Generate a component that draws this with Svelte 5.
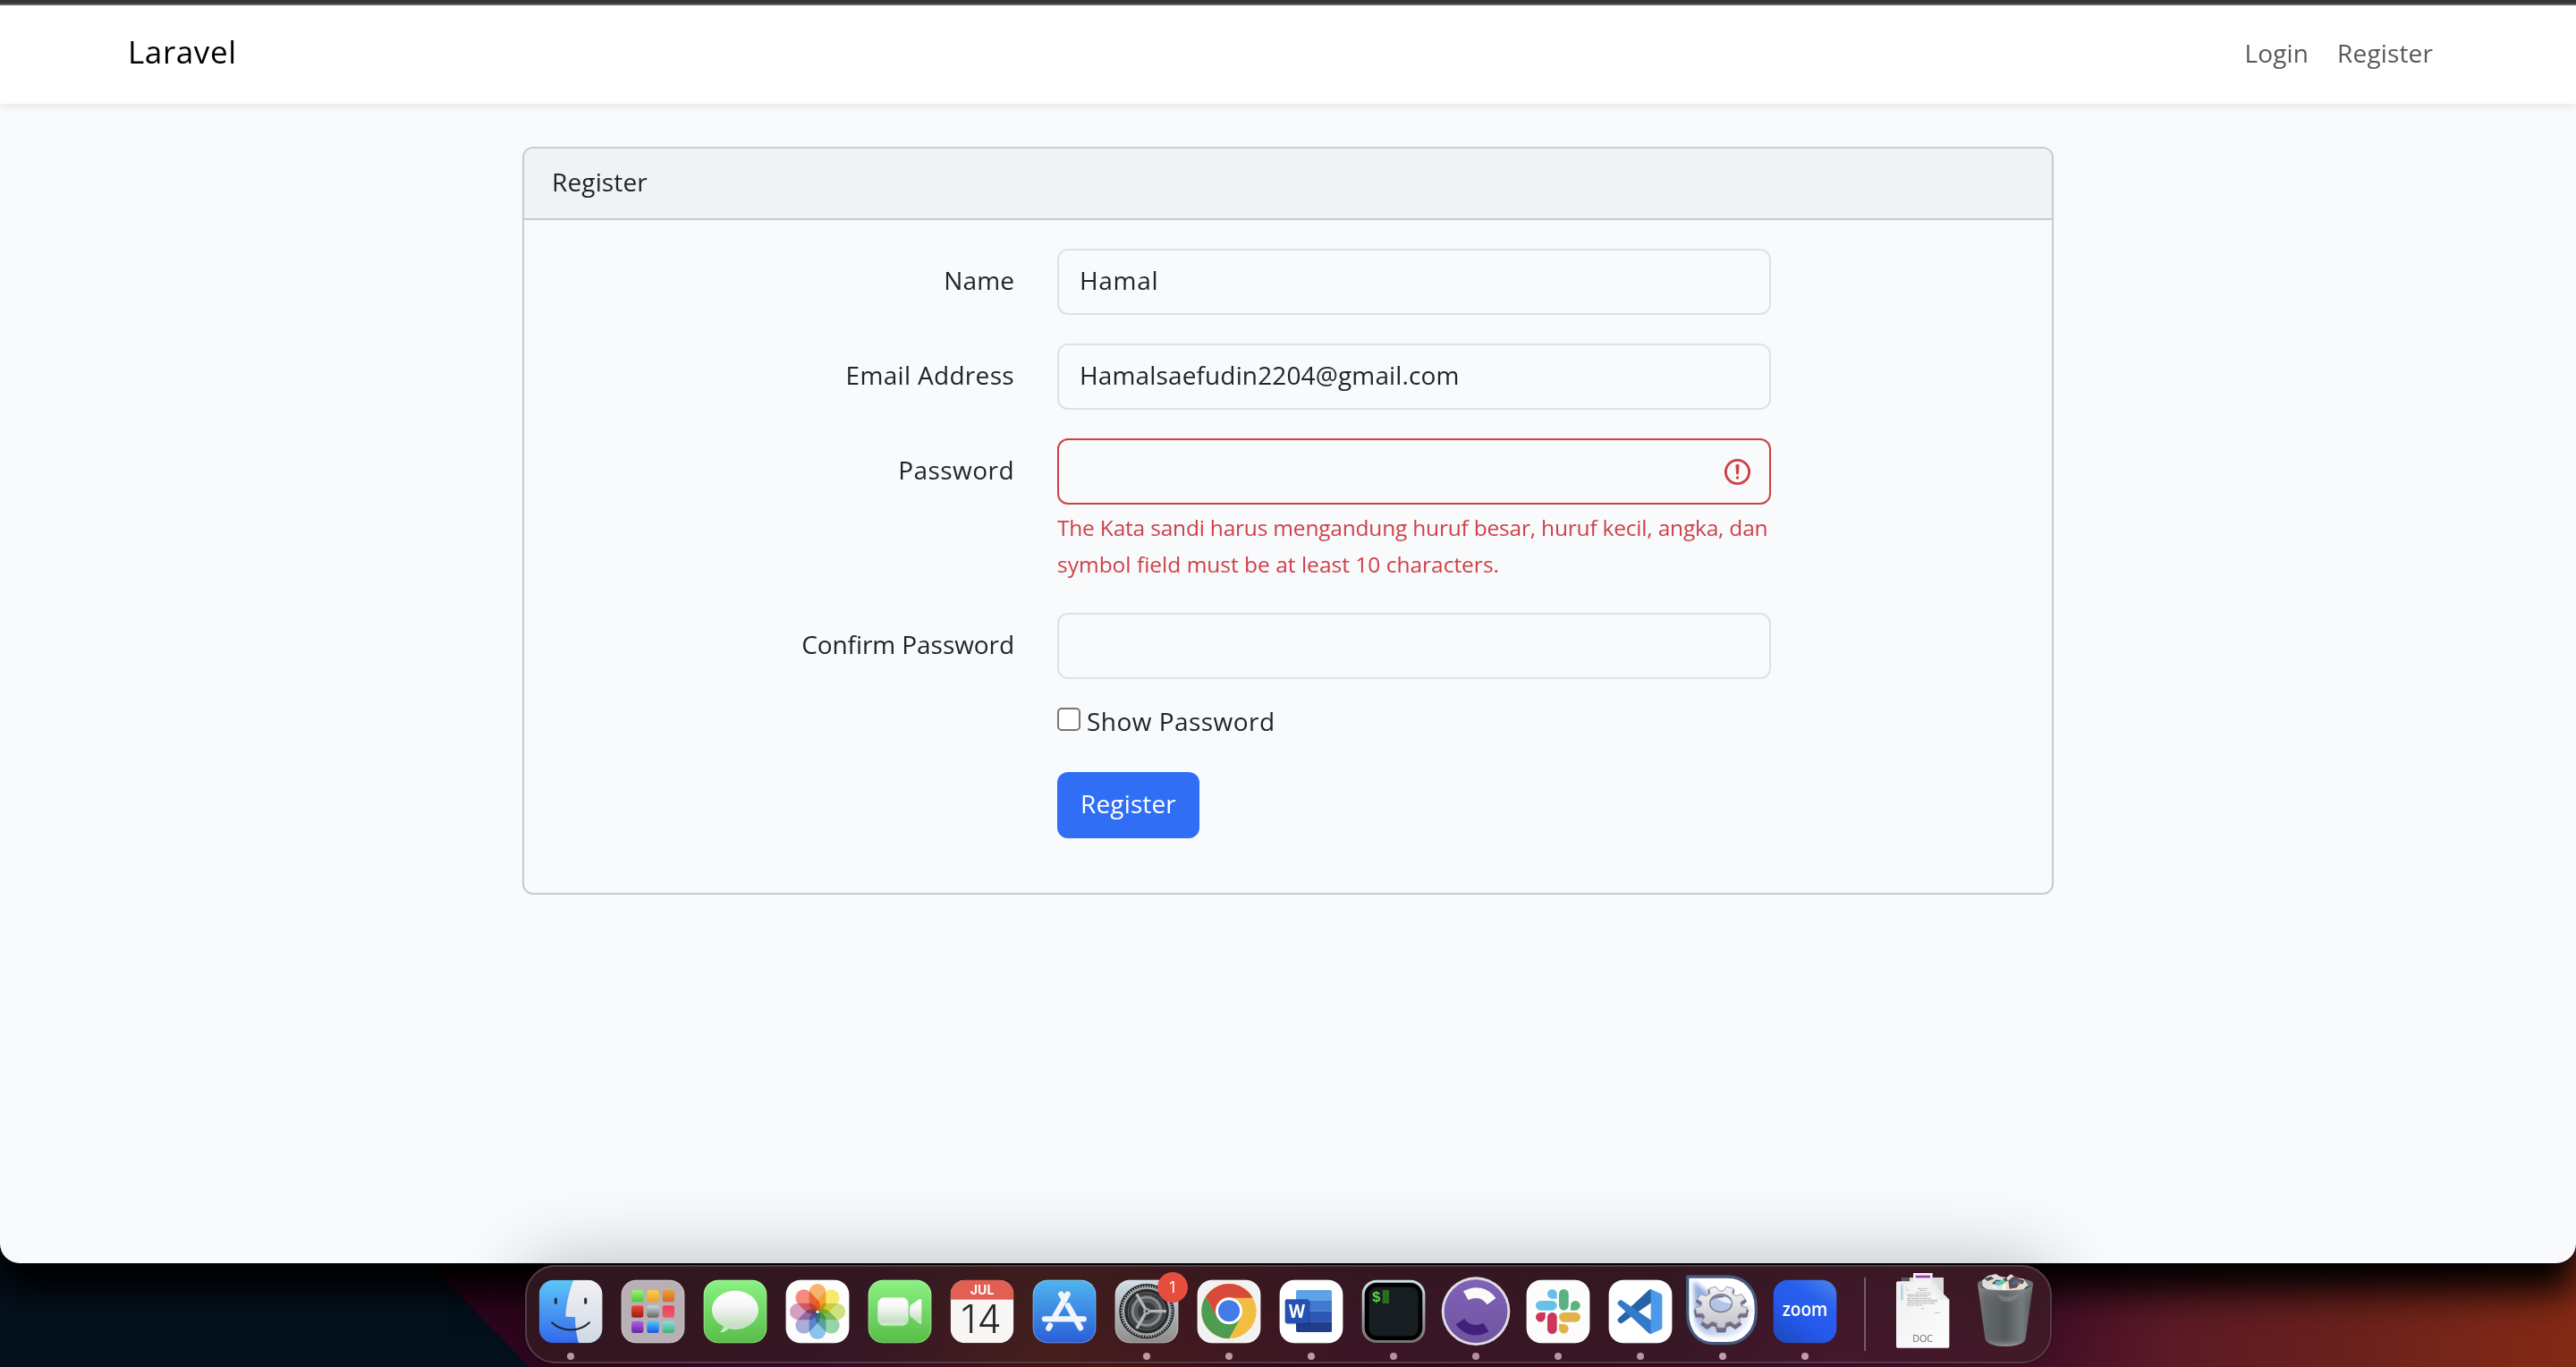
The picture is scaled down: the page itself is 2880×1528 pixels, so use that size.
<script>
  let showPassword = $state(false);
  let name = $state('Hamal');
  let email = $state('Hamalsaefudin2204@gmail.com');
  let password = $state('');
  let confirmation = $state('');

  const petals = [
    ['#f2932f', 0],
    ['#f5e02e', 45],
    ['#bcd548', 90],
    ['#6cc083', 135],
    ['#5ba8e4', 180],
    ['#8588ca', 225],
    ['#c077aa', 270],
    ['#f05a48', 315],
  ];

  const tiles = [
    ['#9cf478', '#4fc435'], ['#fbd04a', '#eda02a'], ['#f0a032', '#d5682a'],
    ['#ee4836', '#9c1b16'], ['#cdd9de', '#646466'], ['#f03c58', '#ea5c6c'],
    ['#b060e8', '#6426a4'], ['#3fd0fa', '#2450e0'], ['#84e4dc', '#42ac78'],
  ];

  // Outline of a toothed wheel, scaled separately on each axis.
  function wheel(cx, cy, rx, ry, teeth, depth, turn = 0) {
    const pts = [];
    for (let i = 0; i < teeth; i++) {
      for (const [f, r] of [[-0.33, depth], [-0.2, 1], [0.2, 1], [0.33, depth]]) {
        const a = ((i + f + turn) / teeth) * Math.PI * 2 - Math.PI / 2;
        pts.push(`${(cx + Math.cos(a) * rx * r).toFixed(1)} ${(cy + Math.sin(a) * ry * r).toFixed(1)}`);
      }
    }
    return `M${pts.join('L')}Z`;
  }
</script>

{#snippet plate(x, fill)}
  <rect {x} y="122" width="212" height="212" rx="49" {fill} />
  <rect x={x + 1.5} y="123.5" width="209" height="209" rx="48" fill="none" stroke="#fff" stroke-opacity=".28" stroke-width="3" />
{/snippet}

{#snippet alertIcon()}
  <svg class="alert" viewBox="0 0 12 12" fill="none" stroke="#cf4048" stroke-width="1">
    <circle cx="6" cy="6" r="4.5" />
    <path stroke-linejoin="round" d="M5.8 3.6h.4L6 6.5z" />
    <circle cx="6" cy="8.2" r=".6" fill="#cf4048" stroke="none" />
  </svg>
{/snippet}

<div class="desktop">
  <svg class="wallpaper" viewBox="0 0 2880 140" preserveAspectRatio="none">
    <defs>
      <linearGradient id="wall" x1="0" x2="1">
        <stop offset=".16" stop-color="#2a0519" />
        <stop offset=".32" stop-color="#420a30" />
        <stop offset=".43" stop-color="#5a1a12" />
        <stop offset=".5" stop-color="#3a0620" />
        <stop offset=".74" stop-color="#4a0f30" />
        <stop offset=".8" stop-color="#4a1129" />
        <stop offset=".85" stop-color="#5d1b25" />
        <stop offset=".92" stop-color="#6c221b" />
        <stop offset="1" stop-color="#852a15" />
      </linearGradient>
    </defs>
    <rect width="2880" height="140" fill="url(#wall)" />
    <path d="M0 0H455L592 140H0z" fill="#04111d" />
  </svg>

  <div class="window">
    <div class="chrome-edge"></div>
    <nav class="navbar">
      <a class="brand" href="#home">Laravel</a>
      <div class="links">
        <a class="login" href="#login">Login</a>
        <a class="reg" href="#register">Register</a>
      </div>
    </nav>

    <main>
      <section class="card">
        <header class="card-header">Register</header>
        <form class="card-body">
          <div class="row">
            <label class="t-name" for="name">Name</label>
            <input id="name" class="control t-hamal" type="text" bind:value={name} />
          </div>
          <div class="row">
            <label class="t-email" for="email">Email Address</label>
            <input id="email" class="control t-mail" type="text" bind:value={email} />
          </div>
          <div class="row">
            <label class="t-pass" for="password">Password</label>
            <div>
              <div class="field">
                <input id="password" class="control invalid" type={showPassword ? 'text' : 'password'} bind:value={password} />
                {@render alertIcon()}
              </div>
              <p class="feedback">
                <span class="t-err1">The Kata sandi harus mengandung huruf besar, huruf kecil, angka, dan</span><br />
                <span class="t-err2">symbol field must be at least 10 characters.</span>
              </p>
            </div>
          </div>
          <div class="row">
            <label class="t-confirm" for="confirm">Confirm Password</label>
            <input id="confirm" class="control" type={showPassword ? 'text' : 'password'} bind:value={confirmation} />
          </div>
          <div class="row check-row">
            <span></span>
            <label class="check">
              <input type="checkbox" bind:checked={showPassword} />
              <span class="t-show">Show Password</span>
            </label>
          </div>
          <div class="row last">
            <span></span>
            <button type="button" class="btn">Register</button>
          </div>
        </form>
      </section>
    </main>
  </div>

  <div class="dock">
    <!-- Finder -->
    <svg class="app" viewBox="96 72 276 330">
      <defs>
        <linearGradient id="fb" x2="0" y2="1"><stop stop-color="#5cc6f8" /><stop offset="1" stop-color="#3468ec" /></linearGradient>
        <linearGradient id="fw" x2="0" y2="1"><stop stop-color="#f1f1f3" /><stop offset="1" stop-color="#d0d8e6" /></linearGradient>
        <clipPath id="fc"><rect x="128" y="122" width="212" height="212" rx="49" /></clipPath>
      </defs>
      <g clip-path="url(#fc)">
        <rect x="128" y="122" width="212" height="212" fill="url(#fb)" />
        <path d="M244 122C228 160 219 205 217 241q0 5 5 5h27c0 34 5 62 12 88h85V122z" fill="url(#fw)" />
      </g>
      <path d="M184 186v13M284 186v13" stroke="#222a38" stroke-width="9" stroke-linecap="round" />
      <path d="M171 265c34 33 92 33 126 0" fill="none" stroke="#20242c" stroke-width="6" stroke-linecap="round" />
      <circle cx="234" cy="378" r="12" fill="#b795a8" />
    </svg>
    <!-- Launchpad -->
    <svg class="app" viewBox="372 72 276 330">
      {@render plate(404, '#b9b0b6')}
      {#each tiles as [top, bottom], i}
        <linearGradient id="lp{i}" x2="0" y2="1"><stop stop-color={top} /><stop offset="1" stop-color={bottom} /></linearGradient>
        <rect x={438 + (i % 3) * 52} y={156 + Math.floor(i / 3) * 52} width="40" height="40" rx="8" fill="url(#lp{i})" />
      {/each}
    </svg>
    <!-- Messages -->
    <svg class="app" viewBox="648 72 276 330">
      <defs>
        <linearGradient id="gr" x2="0" y2="1"><stop stop-color="#8bf283" /><stop offset="1" stop-color="#58bd48" /></linearGradient>
        <linearGradient id="wg" x2="0" y2="1"><stop stop-color="#ffffff" /><stop offset=".35" stop-color="#f6f7f6" /><stop offset=".85" stop-color="#c5dfc2" /><stop offset="1" stop-color="#d4eed0" /></linearGradient>
      </defs>
      {@render plate(680, 'url(#gr)')}
      <path d="M786 158c43 0 78 29 78 65s-35 65-78 65c-8 0-15-1-22-3-7 7-16 12-25 13-3 0-3-2-1-4 4-4 8-9 9-16-24-11-39-31-39-55 0-36 35-65 78-65z" fill="url(#wg)" />
    </svg>
    <!-- Photos -->
    <svg class="app" viewBox="924 72 276 330">
      {@render plate(956, '#fdfdfd')}
      <g class="petals">
        {#each petals as [color, angle]}
          <rect x="1034" y="135" width="56" height="93" rx="28" fill={color} fill-opacity=".86" transform="rotate({angle} 1062 228)" />
        {/each}
      </g>
      <circle cx="1062" cy="229" r="5" fill="#f4f4e8" />
    </svg>
    <!-- FaceTime -->
    <svg class="app" viewBox="1200 72 276 330">
      {@render plate(1232, 'url(#gr)')}
      <rect x="1264" y="181" width="103" height="94" rx="21" fill="url(#wg)" stroke="#b9e6b2" stroke-width="2" />
      <path d="M1371 214q0-5 4-8l28-19q8-4 8 4v74q0 8-8 3l-27-21q-5-4-5-10z" fill="url(#wg)" />
    </svg>
    <!-- Calendar -->
    <svg class="app" viewBox="36 72 276 330">
      <defs>
        <clipPath id="cc"><rect x="68" y="122" width="212" height="212" rx="49" /></clipPath>
      </defs>
      <g clip-path="url(#cc)">
        <rect x="68" y="122" width="212" height="212" fill="#f7f6f4" />
        <rect x="68" y="122" width="212" height="66" fill="#e25f54" />
      </g>
      <text class="month" x="174" y="172" text-anchor="middle" textLength="80">JUL</text>
      <text class="day" x="171" y="300" text-anchor="middle" textLength="136">14</text>
    </svg>
    <!-- App Store -->
    <svg class="app" viewBox="312 72 276 330">
      <defs>
        <linearGradient id="as" x2="0" y2="1"><stop stop-color="#50b4ee" /><stop offset="1" stop-color="#2a5ed8" /></linearGradient>
      </defs>
      {@render plate(344, 'url(#as)')}
      <g stroke="#f1f6fd" stroke-width="19" stroke-linecap="round">
        <path d="M384 253h131" />
        <path d="M461 170l-44 76" />
        <path d="M439 170l11 19M462 208l42 75" />
        <path d="M402 275l-5 9" />
      </g>
    </svg>
    <!-- System settings -->
    <svg class="app" viewBox="588 72 276 330">
      <defs>
        <linearGradient id="ss" x2="0" y2="1"><stop stop-color="#d2dfe6" /><stop offset="1" stop-color="#8e8c8a" /></linearGradient>
      </defs>
      {@render plate(620, 'url(#ss)')}
      <circle cx="726" cy="227" r="92" fill="#1e2022" />
      <circle cx="726" cy="227" r="78" fill="#2a2b2c" stroke="#a9adb0" stroke-width="7" />
      <circle cx="726" cy="227" r="84" fill="none" stroke="#a9adb0" stroke-width="8" stroke-dasharray="4.4 4.4" />
      <circle cx="726" cy="227" r="62" fill="none" stroke="#8f9395" stroke-width="2" />
      <circle cx="726" cy="227" r="47" fill="#58595a" stroke="#8d9092" stroke-width="8" />
      <circle cx="726" cy="227" r="53" fill="none" stroke="#7f8284" stroke-width="6" stroke-dasharray="3 3" />
      <circle cx="726" cy="227" r="30" fill="#3a3b3c" />
      <path d="M726 227h66M726 227l-34-58M726 227l-34 58" stroke="#b4b8ba" stroke-width="10" />
      <circle cx="726" cy="227" r="11" fill="#a5a9ab" />
      <circle cx="726" cy="227" r="4" fill="#333" />
      <circle cx="813" cy="147" r="51" fill="#e54d3d" />
      <text class="count" x="812" y="165" text-anchor="middle">1</text>
      <circle cx="726" cy="378" r="12" fill="#c497a4" />
    </svg>
    <!-- Chrome -->
    <svg class="app" viewBox="864 72 276 330">
      {@render plate(896, '#f3f2f2')}
      <circle cx="1002" cy="227" r="92" fill="#f2be42" />
      <path d="M924 178A92 92 0 0 0 1002 319L1041 249L1002 227L963 249z" fill="#4d9c51" />
      <path d="M924 178A92 92 0 0 1 1082 182H1002V227L963 249z" fill="#d8493a" />
      <circle cx="1002" cy="226" r="45" fill="#fff" />
      <circle cx="1002" cy="226" r="36" fill="#437be8" />
      <circle cx="1002" cy="378" r="12" fill="#bf97a6" />
    </svg>
    <!-- Word -->
    <svg class="app" viewBox="1140 72 276 330">
      {@render plate(1172, '#fff')}
      <path d="M1227 192v-31q0-5 5-5h110q5 0 5 5v31z" fill="#5ea3e8" />
      <path d="M1227 192h120v35h-120z" fill="#4378ce" />
      <path d="M1227 227h120v35h-120z" fill="#2d57b7" />
      <path d="M1227 262h120v30q0 5-5 5h-110q-5 0-5-5z" fill="#203d8a" />
      <rect x="1193" y="191" width="81" height="80" rx="6" fill="#15306f" opacity=".45" />
      <rect x="1190" y="187" width="81" height="80" rx="6" fill="#2551b4" />
      <text class="word" x="1230" y="248" text-anchor="middle" textLength="54" lengthAdjust="spacingAndGlyphs">W</text>
      <circle cx="1278" cy="378" r="12" fill="#bf97a6" />
    </svg>
    <!-- Terminal -->
    <svg class="app" viewBox="36 72 276 330">
      <defs>
        <linearGradient id="tm" x2="0" y2="1"><stop stop-color="#cfe3ea" /><stop offset="1" stop-color="#77716f" /></linearGradient>
      </defs>
      <rect x="68" y="122" width="212" height="211" rx="49" fill="url(#tm)" />
      <rect x="77" y="131" width="194" height="193" rx="41" fill="#000" />
      <rect x="92" y="146" width="165" height="164" rx="24" fill="#161e22" />
      <text class="prompt" x="101" y="195">$</text>
      <rect x="137" y="156" width="22" height="45" fill="#2d6b1d" />
      <circle cx="174" cy="378" r="12" fill="#b88f9f" />
    </svg>
    <!-- Insomnia -->
    <svg class="app" viewBox="312 72 276 330">
      <defs>
        <linearGradient id="im" x2="0" y2="1"><stop stop-color="#8062b8" /><stop offset="1" stop-color="#70549f" /></linearGradient>
      </defs>
      <circle cx="450" cy="227" r="115" fill="#dfdbe6" />
      <circle cx="450" cy="227" r="105" fill="url(#im)" stroke="#5f4691" stroke-width="2" />
      <path d="M408 160A80 80 0 0 1 517 183L488 205A45 45 0 0 0 425 190z" fill="#fafafa" />
      <path d="M383 271A80 80 0 0 0 493 295L475 266A45 45 0 0 1 412 252z" fill="#402079" />
      <circle cx="450" cy="378" r="12" fill="#b88f9f" />
    </svg>
    <!-- Slack -->
    <svg class="app" viewBox="588 72 276 330">
      {@render plate(620, '#fcfcfc')}
      <g fill="#64c2ea">
        <path d="M722 185h-16a16 16 0 1 1 16-16z" />
        <rect x="651" y="192" width="71" height="32" rx="16" />
      </g>
      <g fill="#5bb182">
        <rect x="729" y="153" width="32" height="71" rx="16" />
        <path d="M768 224v-16a16 16 0 1 1 16 16z" />
      </g>
      <g fill="#e3b34b">
        <rect x="729" y="231" width="72" height="32" rx="16" />
        <path d="M729 270h16a16 16 0 1 1-16 16z" />
      </g>
      <g fill="#cf3459">
        <path d="M683 231v16a16 16 0 1 1-16-16z" />
        <rect x="690" y="231" width="32" height="72" rx="16" />
      </g>
      <circle cx="726" cy="378" r="12" fill="#bb92a3" />
    </svg>
    <!-- VS Code -->
    <svg class="app" viewBox="864 72 276 330">
      {@render plate(896, '#fff')}
      <path d="M1030 156q4-4 8-3v46L941 266q-4 4-9 0l-5-5q-4-5 0-9z" fill="#2863a8" />
      <path d="M1030 301q4 3 8 2v-46L941 191q-4-4-9 0l-5 5q-4 5 0 9z" fill="#3579cb" />
      <path d="M1037 153l33 15q5 3 5 8v105q0 5-5 8l-33 14z" fill="#4a99ea" />
      <circle cx="1002" cy="378" r="12" fill="#bb92a3" />
    </svg>
    <!-- Gear utility -->
    <svg class="app" viewBox="60 72 276 330">
      <defs>
        <linearGradient id="gb" x1=".1" y1=".1" x2="1" y2=".9"><stop stop-color="#8ba9e0" /><stop offset=".5" stop-color="#b9caea" /><stop offset="1" stop-color="#eef3fb" /></linearGradient>
        <linearGradient id="gm" x2="0" y2="1"><stop stop-color="#f4f4f5" /><stop offset="1" stop-color="#c4c2ca" /></linearGradient>
        <filter id="soft" x="-20%" y="-20%" width="140%" height="140%"><feGaussianBlur stdDeviation="8" /></filter>
        <clipPath id="gc"><path d="M80 111H215C270 111 310 153 310 213V230C310 292 270 335 213 335H167C115 335 80 295 80 235z" /></clipPath>
      </defs>
      <path d="M80 111H215C270 111 310 153 310 213V230C310 292 270 335 213 335H167C115 335 80 295 80 235z" fill="#fff" />
      <g clip-path="url(#gc)">
        <path d="M100 125L190 195L292 210C292 270 260 312 208 312H175C130 312 103 280 103 232z" fill="url(#gb)" filter="url(#soft)" />
      </g>
      <path d="M80 111H215C270 111 310 153 310 213V230C310 292 270 335 213 335H167C115 335 80 295 80 235z" fill="none" stroke="#435a7e" stroke-width="10" stroke-linejoin="round" />
      <path d={wheel(193, 222, 89, 74, 9, 0.78, 0.5)} fill="#706d84" stroke="#706d84" stroke-width="6" stroke-linejoin="round" />
      <path d={wheel(193, 213, 87, 70, 9, 0.78, 0.5)} fill="url(#gm)" stroke="#9a98a6" stroke-width="3" stroke-linejoin="round" />
      <ellipse cx="192" cy="200" rx="37" ry="30" fill="#b3c4e8" stroke="#77758a" stroke-width="4" />
      <path d="M158 193q8-20 34-20t34 20q-12-12-34-12t-34 12z" fill="#77758a" />
      <path d="M180 186q24 14 48 16q-2-18-22-24z" fill="#e8eefa" />
      <circle cx="198" cy="378" r="12" fill="#c59ab0" />
    </svg>
    <!-- Zoom -->
    <svg class="app" viewBox="336 72 276 330">
      <defs>
        <linearGradient id="zm" x1="1" x2=".3" y2="1"><stop stop-color="#4a86ea" /><stop offset=".35" stop-color="#2a60ee" /><stop offset=".7" stop-color="#2458ea" /><stop offset="1" stop-color="#1f4cc8" /></linearGradient>
      </defs>
      <rect x="368" y="122" width="212" height="212" rx="49" fill="url(#zm)" />
      <text class="zoom" x="398" y="244" textLength="152" lengthAdjust="spacingAndGlyphs">zoom</text>
      <circle cx="474" cy="378" r="12" fill="#c59ab0" />
    </svg>

    <span class="separator"></span>

    <!-- Documents stack -->
    <svg class="app" viewBox="732 72 276 330">
      <defs>
        <linearGradient id="dc" x2="1" y2="1"><stop stop-color="#f0f0f0" /><stop offset="1" stop-color="#fdfdfd" /></linearGradient>
        <linearGradient id="fold" x1="0" y1="1" x2="1" y2="0"><stop stop-color="#ffffff" /><stop offset=".5" stop-color="#e6e6e6" /><stop offset="1" stop-color="#c4c4c4" /></linearGradient>
      </defs>
      <path d="M799 114h140v80H799z" fill="#dcdcde" />
      <path d="M799 114h26v14h-26z" fill="#55565c" />
      <path d="M837 99h65v30h-65z" fill="#f4f0f4" />
      <path d="M845 107h49v8h-49z" fill="#9c3ab0" />
      <path d="M785 127h112l61 61v157q0 5-5 5H785q-5 0-5-5V132q0-5 5-5z" fill="url(#dc)" />
      <path d="M795 137h8v53h-8z" fill="#b5d6ea" />
      <path d="M810 145l14 14M812 156h10" stroke="#e2b8a8" stroke-width="2" />
      <path d="M852 151h34M858 157h22M846 165h48M816 172h80M820 177h68M816 184h82M816 190h104M820 195h98M816 201h92M816 207h50M865 218h8M910 232h19" stroke="#9a9a9a" stroke-width="2" stroke-dasharray="14 2 8 2" />
      <path d="M898 112q-1 40-1 76 30-4 61 0-17-6-29-28-16-28-31-48z" fill="url(#fold)" stroke="#d0d0d0" stroke-width="1" />
      <text class="doc" x="869" y="330" text-anchor="middle" textLength="69" lengthAdjust="spacingAndGlyphs">DOC</text>
    </svg>
    <!-- Trash -->
    <svg class="app" viewBox="1008 72 276 330">
      <defs>
        <linearGradient id="tr" x2="1"><stop stop-color="#787d80" /><stop offset=".15" stop-color="#626769" /><stop offset=".5" stop-color="#555b5d" /><stop offset=".8" stop-color="#767b7d" /><stop offset="1" stop-color="#53585a" /></linearGradient>
        <linearGradient id="tl" x2="0" y2="1"><stop stop-color="#bcc0c2" stop-opacity=".35" /><stop offset=".4" stop-color="#555" stop-opacity="0" /><stop offset=".85" stop-color="#555" stop-opacity="0" /><stop offset="1" stop-color="#c2c6c8" stop-opacity=".6" /></linearGradient>
      </defs>
      <ellipse cx="1146" cy="134" rx="93" ry="20" fill="#6e7375" />
      <path d="M1068 124l20-16 26-6 14 8 22 4 14-11 22 12 22 4 14 20-18 17-50 10-60-5-24-17z" fill="#dedddb" />
      <path d="M1076 118l22-8 10 8-22 8zM1100 134l14-12 18 0-10 16zM1190 118l20 6-6 12-18-4zM1138 118l12-4 4 12-12 2z" fill="#504f4e" />
      <path d="M1110 128l34-6 2 12-26 8z" fill="#48c8d8" />
      <path d="M1124 132l22-4-4 12z" fill="#7ac452" />
      <path d="M1156 124l20-16 24 16-16 24-24 4z" fill="#6c4a44" />
      <path d="M1166 132l14-12 12 6-14 14z" fill="#3b6cae" />
      <path d="M1184 134l12-8-2 14z" fill="#c8703a" />
      <path d="M1096 140l24 6-8 8zM1136 138l10-8 2 26-14-2z" fill="#f5f4f2" />
      <path d="M1053 134c8 14 30 20 50 21 30 3 60 3 86 0 20-1 42-7 50-21l-25 185c-4 35-132 35-136 0z" fill="url(#tr)" />
      <path d="M1053 134c8 14 30 20 50 21 30 3 60 3 86 0 20-1 42-7 50-21l-25 185c-4 35-132 35-136 0z" fill="url(#tl)" />
      <path d="M1118 172q46 14 76-4-26 38-60 24z" fill="#a5aaac" opacity=".35" />
    </svg>
  </div>
</div>

<style>
  :global(body) { background: #04111d; }

  .desktop {
    position: relative;
    width: 2880px;
    height: 1528px;
    overflow: hidden;
    font-family: "Open Sans", "Noto Sans", sans-serif;
    font-size: 28px;
    line-height: 46px;
    color: #212529;
  }
  .desktop * { box-sizing: border-box; }
  .wallpaper {
    position: absolute;
    left: 0;
    bottom: 0;
    width: 2880px;
    height: 140px;
  }

  .window {
    position: relative;
    height: 1412px;
    background: #f8fafc;
    border-radius: 0 0 22px 22px;
    box-shadow: 0 32px 40px #000, 0 0 2px #000;
  }
  .chrome-edge {
    height: 6px;
    background: #363636;
    border-bottom: 2px solid #636363;
  }
  .navbar {
    display: flex;
    align-items: center;
    justify-content: space-between;
    height: 110px;
    padding: 0 160px 0 143px;
    background: #fff;
    box-shadow: 0 4px 8px rgba(0, 0, 0, .075);
  }
  .navbar a { text-decoration: none; }
  .brand {
    padding-bottom: 6px;
    font-size: 35px;
    letter-spacing: .6px;
    color: #000;
  }
  .links {
    display: flex;
    gap: 32px;
    padding-bottom: 4px;
  }
  .links a { color: #595959; }
  .login { letter-spacing: .15px; }
  .reg { letter-spacing: .14px; }

  main {
    display: flex;
    justify-content: center;
    padding-top: 48px;
  }
  .card {
    width: 1712px;
    height: 836px;
    border: 2px solid #c9cbcd;
    border-radius: 12px;
    overflow: hidden;
  }
  .card-header {
    height: 80px;
    padding: 14px 31px 0;
    background: #f1f2f4;
    border-bottom: 2px solid #c9cbcd;
    letter-spacing: .14px;
  }
  .card-body { padding: 32px 0; }
  .row {
    display: grid;
    grid-template-columns: 548px 798px;
    column-gap: 48px;
    margin-bottom: 32px;
  }
  .row > label:first-child {
    height: 74px;
    padding-top: 12px;
    text-align: right;
    white-space: nowrap;
  }
  .control {
    display: block;
    width: 798px;
    height: 74px;
    padding: 10px 23px 14px;
    border: 2px solid #dee2e6;
    border-radius: 12px;
    outline: none;
    background: #f8fafc;
    color: #212529;
    font: inherit;
  }
  .field { position: relative; }
  .invalid { border-color: #cf4048; }
  .alert {
    position: absolute;
    right: 20px;
    top: 20px;
    width: 35px;
    height: 35px;
  }
  .feedback {
    margin: 6.4px 0 2px;
    font-size: 24.5px;
    line-height: 40.32px;
    color: #cf4048;
    white-space: nowrap;
  }
  .check-row { margin-bottom: 46px; }
  .check {
    display: flex;
    align-items: center;
    height: 26px;
    line-height: 26px;
  }
  .check span { padding-top: 3px; }
  .check input {
    appearance: none;
    width: 26px;
    height: 26px;
    margin: 0 7px 0 0;
    border: 2px solid #767676;
    border-radius: 5px;
    background: #fff;
  }
  .btn {
    justify-self: start;
    width: 159px;
    height: 74px;
    padding: 0 0 4px;
    border: 0;
    border-radius: 12px;
    background: #306ef6;
    color: #fff;
    font: inherit;
    letter-spacing: .14px;
  }
  .last { margin-bottom: 0; }

  .t-name { letter-spacing: .1px; }
  .t-email { letter-spacing: .32px; }
  .t-pass { letter-spacing: .45px; }
  .t-confirm { letter-spacing: -.07px; }
  .t-hamal { letter-spacing: .7px; }
  .t-mail { letter-spacing: .14px; }
  .t-err1 { letter-spacing: -.2px; }
  .t-err2 { letter-spacing: 0; }
  .t-show { letter-spacing: .46px; }

  .dock {
    position: absolute;
    left: 587px;
    top: 1414px;
    display: flex;
    width: 1707px;
    height: 110px;
    padding-left: 3px;
    border: 2px solid #573b44;
    border-radius: 34px;
    background:
      linear-gradient(rgba(40, 24, 26, .35), rgba(60, 16, 34, .1)),
      linear-gradient(90deg, #32161f 0%, #371725 22%, #48201c 34%, #431a1f 42%, #3b1626 55%, #381826 75%, #46182e 86%, #421a27 100%);
    box-shadow: 0 0 2px #000, 0 0 84px rgba(0, 0, 0, .28);
  }
  .app {
    flex: none;
    width: 92px;
    height: 110px;
    margin-top: -2px;
    overflow: visible;
  }
  .petals rect { mix-blend-mode: multiply; opacity: .82; }
  .petals { isolation: isolate; }
  .separator {
    width: 2px;
    height: 82px;
    margin: 12px 18px 0 20px;
    background: #7a5a69;
  }
  .month { font: 700 42px Inter, sans-serif; fill: #fff; }
  .day { font: 300 130px Inter, sans-serif; fill: #2b2b2b; }
  .count { font: 400 50px Inter, sans-serif; fill: #fff; }
  .word { font: 700 62px "Open Sans", sans-serif; fill: #fff; }
  .prompt { font: 700 50px "Liberation Mono", monospace; fill: #5ad83c; }
  .zoom { font: 600 64px "Open Sans", sans-serif; fill: #fff; }
  .doc { font: 400 34px "Open Sans", sans-serif; fill: #6c6c6c; }
</style>
